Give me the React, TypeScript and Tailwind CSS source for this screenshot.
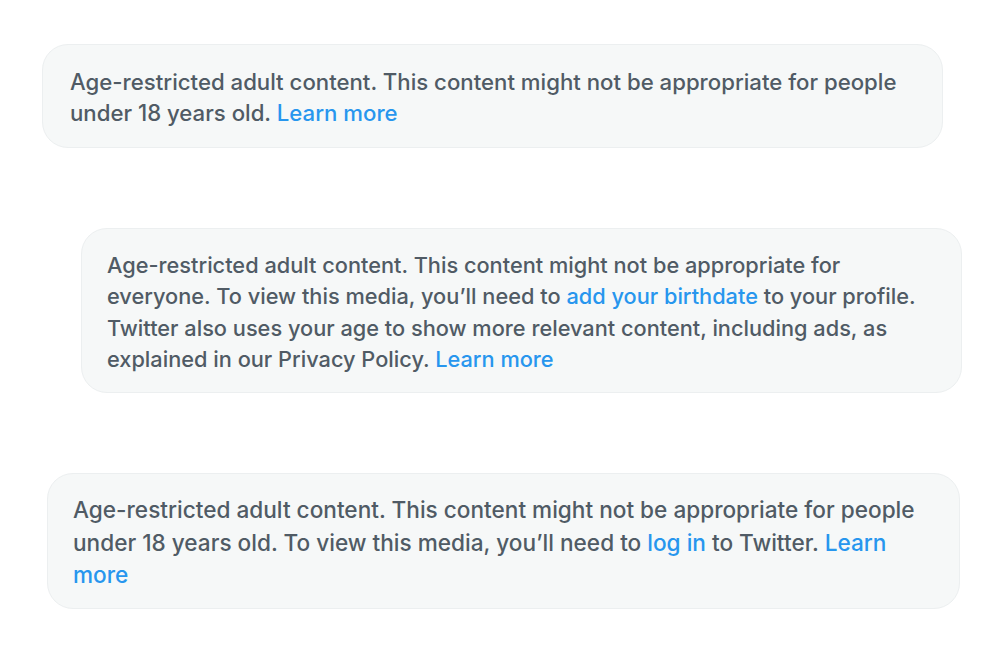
import React from 'react';

const link = 'text-[#2796ee]';

function Notice({ className, children }: { className: string; children: React.ReactNode }) {
  return (
    <div
      className={`rounded-[26px] border border-[#eceff0] bg-[#f6f8f8] font-medium text-[#505b65] ${className}`}
    >
      {children}
    </div>
  );
}

export default function App() {
  return (
    <div className="min-h-[669px] w-[1000px] bg-white pt-[44px] font-['Inter',sans-serif]">
      <div className="flex flex-col gap-[80px]">
        <Notice className="ml-[42px] w-[901px] pl-[27px] pr-[30px] pt-[21px] pb-[19px] text-[22.2px] leading-[31px]">
          <p>
            Age-restricted adult content. This content might not be appropriate for people under 18 years old.{' '}
            <span className={link}>Learn more</span>
          </p>
        </Notice>

        <Notice className="ml-[81px] w-[881px] pl-[25px] pr-[30px] pt-[21px] pb-[17px] text-[21.75px] leading-[31.3px]">
          <p>
            Age-restricted adult content. This content might not be appropriate for everyone. To view this media,
            you’ll need to <span className={link}>add your birthdate</span> to your profile. Twitter also uses your age
            to show more relevant content, including ads, as explained in our Privacy Policy.{' '}
            <span className={link}>Learn more</span>
          </p>
        </Notice>

        <Notice className="ml-[47px] w-[913px] pl-[25px] pr-[30px] pt-[20px] pb-[16px] text-[22.6px] leading-[32.5px]">
          <p>
            Age-restricted adult content. This content might not be appropriate for people under 18 years old. To view
            this media, you’ll need to <span className={link}>log in</span> to Twitter.{' '}
            <span className={link}>Learn more</span>
          </p>
        </Notice>
      </div>
    </div>
  );
}
